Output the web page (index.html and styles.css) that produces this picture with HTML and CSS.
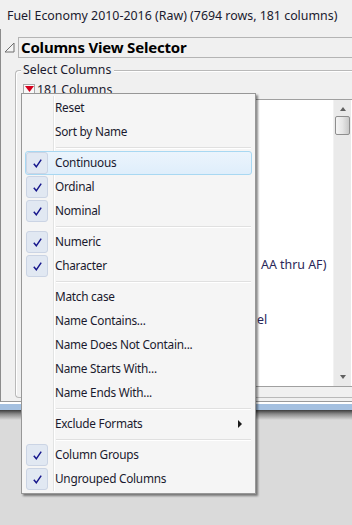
FILE: index.html
```html
<!DOCTYPE html>
<html lang="en">
<head>
    <meta charset="UTF-8">
    <title>Columns View Selector</title>
    <link rel="stylesheet" href="styles.css">
</head>
<body>
    <div class="page">
        <div class="window">
            <div class="title">Fuel Economy 2010-2016 (Raw) (7694 rows, 181 columns)</div>
            <div class="outline">
                <div class="outline-head">
                    <svg class="disclosure" width="11" height="11" viewBox="0 0 11 11">
                        <polygon points="10,1 10,10 1,10" fill="#f4f4f4" stroke="#6e6e6e" stroke-width="1"/>
                    </svg>
                    <div class="outline-title">Columns View Selector</div>
                </div>
                <div class="groupbox">
                    <div class="legend">Select Columns</div>
                    <div class="col-head">
                        <span class="red-btn"><svg width="9" height="6" viewBox="0 0 9 6"><polygon points="0,0 9,0 4.5,6" fill="#d4001c"/></svg></span>
                        <span class="col-count">181 Columns</span>
                    </div>
                    <div class="listbox">
                        <div class="list-items">
                            <div class="list-row r1">AA thru AF)</div>
                            <div class="list-row r2">el</div>
                        </div>
                        <div class="scrollbar">
                            <span class="arrow up"></span>
                            <span class="thumb"></span>
                            <span class="spacer"></span>
                            <span class="arrow down"></span>
                        </div>
                    </div>
                </div>
            </div>
        </div>
        <div class="frame-bottom"></div>
        <div class="frame-shadow"></div>

        <div class="menu">
            <div class="item"><span class="gutter"></span><span class="label">Reset</span></div>
            <div class="item"><span class="gutter"></span><span class="label">Sort by Name</span></div>
            <div class="sep"></div>
            <div class="item hover"><span class="gutter"><span class="check"><svg width="11" height="11" viewBox="0 0 11 11"><path d="M1.8 5.8 L4.3 8.8 L9.2 1.6" fill="none" stroke="#16168c" stroke-width="1.5"/></svg></span></span><span class="label">Continuous</span></div>
            <div class="item"><span class="gutter"><span class="check"><svg width="11" height="11" viewBox="0 0 11 11"><path d="M1.8 5.8 L4.3 8.8 L9.2 1.6" fill="none" stroke="#16168c" stroke-width="1.5"/></svg></span></span><span class="label">Ordinal</span></div>
            <div class="item"><span class="gutter"><span class="check"><svg width="11" height="11" viewBox="0 0 11 11"><path d="M1.8 5.8 L4.3 8.8 L9.2 1.6" fill="none" stroke="#16168c" stroke-width="1.5"/></svg></span></span><span class="label">Nominal</span></div>
            <div class="sep"></div>
            <div class="item"><span class="gutter"><span class="check"><svg width="11" height="11" viewBox="0 0 11 11"><path d="M1.8 5.8 L4.3 8.8 L9.2 1.6" fill="none" stroke="#16168c" stroke-width="1.5"/></svg></span></span><span class="label">Numeric</span></div>
            <div class="item"><span class="gutter"><span class="check"><svg width="11" height="11" viewBox="0 0 11 11"><path d="M1.8 5.8 L4.3 8.8 L9.2 1.6" fill="none" stroke="#16168c" stroke-width="1.5"/></svg></span></span><span class="label">Character</span></div>
            <div class="sep"></div>
            <div class="item"><span class="gutter"></span><span class="label">Match case</span></div>
            <div class="item"><span class="gutter"></span><span class="label">Name Contains...</span></div>
            <div class="item"><span class="gutter"></span><span class="label">Name Does Not Contain...</span></div>
            <div class="item"><span class="gutter"></span><span class="label">Name Starts With...</span></div>
            <div class="item"><span class="gutter"></span><span class="label">Name Ends With...</span></div>
            <div class="sep"></div>
            <div class="item"><span class="gutter"></span><span class="label">Exclude Formats</span><span class="submenu"></span></div>
            <div class="sep"></div>
            <div class="item"><span class="gutter"><span class="check"><svg width="11" height="11" viewBox="0 0 11 11"><path d="M1.8 5.8 L4.3 8.8 L9.2 1.6" fill="none" stroke="#16168c" stroke-width="1.5"/></svg></span></span><span class="label">Column Groups</span></div>
            <div class="item"><span class="gutter"><span class="check"><svg width="11" height="11" viewBox="0 0 11 11"><path d="M1.8 5.8 L4.3 8.8 L9.2 1.6" fill="none" stroke="#16168c" stroke-width="1.5"/></svg></span></span><span class="label">Ungrouped Columns</span></div>
        </div>
    </div>
</body>
</html>
```

FILE: styles.css
```css
body {
    margin: 0;
    background: #dadada;
    font-family: "Noto Sans", "Open Sans", sans-serif;
    font-size: 12px;
    color: #1a1a2e;
}

.page {
    position: relative;
    width: 352px;
    height: 525px;
    overflow: hidden;
}

.window {
    background: #f0f0f0;
    height: 404px;
    border-bottom: 1px solid #505860;
    box-sizing: border-box;
}

.title {
    height: 29px;
    padding-left: 7px;
    font-size: 12.4px;
    line-height: 32px;
    white-space: nowrap;
}

.outline {
    border-left: 1px solid #8c8c8c;
    border-bottom: 1px solid #9a9a9a;
    box-shadow: 0 1px 0 #ffffff, 0 2px 0 #ffffff;
    height: 373px;
    box-sizing: border-box;
    padding-top: 8px;
}

.outline-head {
    display: flex;
    align-items: center;
    height: 21px;
}

.disclosure {
    margin: 0 3px 0 3px;
}

.outline-title {
    flex: 1;
    height: 21px;
    border: 1px solid #b4b4b4;
    border-right: none;
    box-sizing: border-box;
    padding-left: 2px;
    font-size: 15px;
    font-weight: bold;
    line-height: 19px;
    color: #000;
    letter-spacing: -0.2px;
}

.groupbox {
    position: relative;
    margin: 12px 0 0 14px;
    height: 328px;
    border: 1px solid #b9b9b9;
    border-right: none;
    border-radius: 4px 0 0 4px;
    box-shadow: inset 1px 1px 0 #ffffff;
    box-sizing: border-box;
    padding: 9px 0 0 7px;
}

.legend {
    position: absolute;
    left: 5px;
    top: -10px;
    padding: 0 3px 0 2px;
    background: #f0f0f0;
    font-size: 12.3px;
    line-height: 18px;
}

.col-head {
    display: flex;
    align-items: center;
    height: 18px;
}

.red-btn {
    display: flex;
    justify-content: center;
    width: 12px;
    height: 11px;
    border: 1px solid #a8a8a8;
    background: #f8f8f8;
    margin-right: 2px;
    padding-top: 1px;
    box-sizing: border-box;
}

.col-count {
    font-size: 12.3px;
}

.listbox {
    display: flex;
    margin-top: 1px;
    height: 288px;
    border: 1px solid #a0a0a0;
    border-right: none;
    background: #ffffff;
    box-sizing: border-box;
}

.list-items {
    flex: 1;
    color: #2a2658;
    font-size: 12.4px;
}

.list-row {
    white-space: nowrap;
    height: 20px;
    line-height: 20px;
}

.list-row.r1 {
    margin-top: 155px;
    margin-left: 237px;
}

.list-row.r2 {
    margin-top: 35px;
    margin-left: 233px;
}

.scrollbar {
    display: flex;
    flex-direction: column;
    align-items: center;
    width: 17px;
    margin-right: 1px;
    background: #eaeaea;
    border-left: 1px solid #f2f2f2;
}

.arrow {
    width: 0;
    height: 0;
    border-left: 3px solid transparent;
    border-right: 3px solid transparent;
    margin: 7px 0;
}

.arrow.up {
    border-bottom: 4px solid #606060;
}

.arrow.down {
    border-top: 4px solid #606060;
}

.thumb {
    width: 15px;
    height: 19px;
    margin-top: -2px;
    border: 1px solid #8e8e8e;
    border-radius: 2px;
    box-sizing: border-box;
    background: linear-gradient(90deg, #f4f4f4, #e6e6e6 50%, #c8c8c8);
}

.spacer {
    flex: 1;
}

.frame-bottom {
    height: 6px;
    background: #a4c0e0;
}

.frame-shadow {
    height: 10px;
    background: linear-gradient(#3c3c3c, #8a8a8a 40%, #dadada);
}

.menu {
    position: absolute;
    left: 21px;
    top: 93px;
    width: 235px;
    height: 401px;
    box-sizing: border-box;
    padding: 2px 3px;
    background: #f5f5f5;
    border: 1px solid #979797;
    box-shadow: 2px 2px 2px rgba(0, 0, 0, 0.45);
    z-index: 2;
    font-size: 11.8px;
    letter-spacing: -0.25px;
}

.menu::before {
    content: "";
    position: absolute;
    left: 31px;
    top: 2px;
    bottom: 2px;
    width: 1px;
    background: #e2e3e3;
    border-right: 1px solid #ffffff;
}

.item {
    position: relative;
    display: flex;
    align-items: center;
    height: 24px;
    line-height: 24px;
    white-space: nowrap;
    border: 1px solid transparent;
    border-radius: 3px;
    box-sizing: border-box;
}

.item.hover {
    background: linear-gradient(#ebf4fc, #dfeefb);
    border-color: #a8d8f2;
}

.label {
    position: relative;
    top: -1px;
}

.gutter {
    display: flex;
    align-items: center;
    width: 22px;
    margin-right: 7px;
    height: 22px;
}

.check {
    display: flex;
    align-items: center;
    justify-content: center;
    width: 22px;
    height: 22px;
    box-sizing: border-box;
    border: 1px solid #cbd4e4;
    border-radius: 3px;
    background: #e1e8f2;
}

.sep {
    height: 7px;
    margin-left: 31px;
    margin-right: 1px;
    background: linear-gradient(#e0e0e0, #e0e0e0) 0 3px / 100% 1px no-repeat,
                linear-gradient(#ffffff, #ffffff) 0 4px / 100% 1px no-repeat;
}

.submenu {
    position: absolute;
    right: 9px;
    top: 7px;
    width: 0;
    height: 0;
    border-top: 4px solid transparent;
    border-bottom: 4px solid transparent;
    border-left: 4px solid #1a1a1a;
}
```
